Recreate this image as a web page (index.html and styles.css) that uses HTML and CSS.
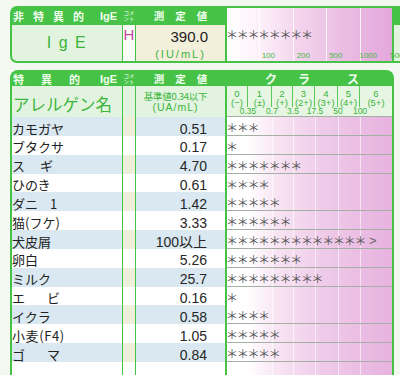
FILE: index.html
```html
<!DOCTYPE html>
<html lang="ja">
<head>
<meta charset="utf-8">
<title>アレルゲン検査結果</title>
<link rel="stylesheet" href="styles.css">
</head>
<body>
<div class="page">
  <section class="box top">
    <div class="hc h-name"><span class="hn1">非特異的</span><span class="ige">IgE</span></div>
    <div class="hc h-com"><span>コメ</span><span>ント</span></div>
    <div class="hc h-val">測定値</div>
    <div class="tgraph">
      <div class="stars tstars">＊＊＊＊＊＊＊＊</div>
      <div class="ticks"><span>100</span><span>200</span><span>500</span><span>1000</span><span>5000</span></div>
    </div>
    <div class="hc h-extra"></div>
    <div class="b-name">I g E</div>
    <div class="b-com">H</div>
    <div class="b-val"><div class="tnum">390.0</div><div class="tunit">(IU/mL)</div></div>
    <div class="b-extra"></div>
  </section>

  <section class="list">
    <div class="row head">
      <div class="hc l-name"><span class="hn2">特異的</span><span class="ige2">IgE</span></div>
      <div class="hc h-com"><span>コメ</span><span>ント</span></div>
      <div class="hc h-val">測定値</div>
      <div class="hc l-class"><span>ク</span><span class="k2">ラ</span><span class="k3">ス</span></div>
    </div>
    <div class="row sub">
      <div class="s-name">アレルゲン名</div>
      <div class="s-com"></div>
      <div class="s-val"><div class="sv1">基準値0.34以下</div><div class="sv2">(UA/mL)</div></div>
      <div class="s-graph">
        <div class="cls">0<br>(−)</div>
        <div class="cls">1<br>(±)</div>
        <div class="cls">2<br>(+)</div>
        <div class="cls">3<br>(2+)</div>
        <div class="cls">4<br>(3+)</div>
        <div class="cls">5<br>(4+)</div>
        <div class="cls last">6<br>(5+)</div>
        <div class="thr"><span>0.35</span></div>
        <div class="thr"><span>0.7</span></div>
        <div class="thr"><span>3.5</span></div>
        <div class="thr"><span>17.5</span></div>
        <div class="thr"><span>50</span></div>
        <div class="thr"><span>100</span></div>
        <div class="thr"></div>
      </div>
    </div>

    <div class="row d odd"><div class="n">カモガヤ</div><div class="c"></div><div class="v">0.51</div><div class="g"><span class="stars">＊＊＊</span></div></div>
    <div class="row d"><div class="n">ブタクサ</div><div class="c"></div><div class="v">0.17</div><div class="g"><span class="stars">＊</span></div></div>
    <div class="row d odd"><div class="n">ス<span class="gap g15">　</span>ギ</div><div class="c"></div><div class="v">4.70</div><div class="g"><span class="stars">＊＊＊＊＊＊＊</span></div></div>
    <div class="row d"><div class="n">ひのき</div><div class="c"></div><div class="v">0.61</div><div class="g"><span class="stars">＊＊＊＊</span></div></div>
    <div class="row d odd"><div class="n">ダニ<span class="gap g12">　</span>1</div><div class="c"></div><div class="v">1.42</div><div class="g"><span class="stars">＊＊＊＊＊</span></div></div>
    <div class="row d"><div class="n">猫(フケ)</div><div class="c"></div><div class="v">3.33</div><div class="g"><span class="stars">＊＊＊＊＊＊</span></div></div>
    <div class="row d odd"><div class="n">犬皮屑</div><div class="c"></div><div class="v">100以上</div><div class="g"><span class="stars">＊＊＊＊＊＊＊＊＊＊＊＊＊</span><span class="more">&gt;</span></div></div>
    <div class="row d"><div class="n">卵白</div><div class="c"></div><div class="v">5.26</div><div class="g"><span class="stars">＊＊＊＊＊＊＊</span></div></div>
    <div class="row d odd"><div class="n">ミルク</div><div class="c"></div><div class="v">25.7</div><div class="g"><span class="stars">＊＊＊＊＊＊＊＊＊</span></div></div>
    <div class="row d"><div class="n">エ<span class="gap g22">　</span>ビ</div><div class="c"></div><div class="v">0.16</div><div class="g"><span class="stars">＊</span></div></div>
    <div class="row d odd"><div class="n">イクラ</div><div class="c"></div><div class="v">0.58</div><div class="g"><span class="stars">＊＊＊＊</span></div></div>
    <div class="row d"><div class="n sp3">小麦(F4)</div><div class="c"></div><div class="v">1.05</div><div class="g"><span class="stars">＊＊＊＊＊</span></div></div>
    <div class="row d odd"><div class="n">ゴ<span class="gap g22">　</span>マ</div><div class="c"></div><div class="v">0.84</div><div class="g"><span class="stars">＊＊＊＊＊</span></div></div>
    <div class="row d"><div class="n"></div><div class="c"></div><div class="v"></div><div class="g"></div></div>
  </section>
</div>
</body>
</html>
```

FILE: styles.css
```css
* { box-sizing: border-box; margin: 0; padding: 0; }
html, body { width: 400px; height: 375px; overflow: hidden; }
body {
  background: #f3f8f0;
  font-family: "Noto Sans CJK JP", "Noto Sans", sans-serif;
  color: #222;
}
.page {
  padding: 6px 0 0 10px;
  display: flex;
  flex-direction: column;
  gap: 7px;
}

/* ---------- shared header cells ---------- */
.hc {
  background: #46c346;
  color: #f2fff0;
  font-weight: 700;
  font-size: 11px;
  line-height: 12px;
  display: flex;
  align-items: center;
  white-space: nowrap;
}
.h-com {
  flex-direction: column;
  justify-content: center;
  font-size: 5.5px;
  line-height: 6.5px;
  font-weight: 400;
}
.h-val {
  justify-content: center;
  letter-spacing: 11px;
  padding-left: 11px;
  font-size: 10.5px;
}
.ige, .ige2 { font-family: "Liberation Sans", sans-serif; letter-spacing: 0; }

/* ---------- top box ---------- */
.box {
  border: 2px solid #46c346;
  background: #46c346;
}
.top {
  width: 424px;
  display: grid;
  grid-template-columns: 110px 12px 89px 166px 40px;
  grid-template-rows: 16px 36px;
  column-gap: 1px;
  row-gap: 1px;
  border-radius: 7px;
  overflow: hidden;
}
.h-name { padding-left: 1px; }
.hn1 { letter-spacing: 9px; }
.ige { margin-left: 7px; }
.h-extra { border-left: 1px solid #46c346; }

.tgraph {
  grid-column: 4;
  grid-row: 1 / 3;
  border-left: 1px solid #46c346;
  display: flex;
  flex-direction: column;
  padding-top: 21px;
  background:
    linear-gradient(to right,
      transparent 32px, rgba(255,255,255,.85) 32px 33px,
      transparent 33px 66px, rgba(255,255,255,.85) 66px 67px,
      transparent 67px 99px, rgba(255,255,255,.85) 99px 100px,
      transparent 100px 133px, rgba(255,255,255,.85) 133px 134px,
      transparent 134px),
    linear-gradient(to right, #ffffff 0%, #fdf2fa 18%, #f3d2ec 45%, #eabce3 72%, #e4a8db 100%);
}
.tstars { line-height: 12px; color: #444; }
.ticks {
  margin-top: auto;
  display: grid;
  grid-template-columns: 32px 34px 33px 34px 32px;
  font-family: "Liberation Sans", sans-serif;
  font-size: 8px;
  line-height: 11px;
  color: #45b845;
}
.ticks span { text-align: right; transform: translateX(50%); }

.b-name {
  background: #e2f4df;
  color: #3cb43c;
  font-family: "Liberation Sans", sans-serif;
  font-size: 16px;
  letter-spacing: 1.5px;
  display: flex;
  align-items: center;
  justify-content: center;
  white-space: pre;
}
.b-com {
  background: #fafcf8;
  color: #c2499e;
  font-family: "Liberation Sans", sans-serif;
  font-size: 15px;
  line-height: 16px;
  padding-top: 2px;
  text-align: center;
}
.b-val {
  background: #f2efdb;
  display: flex;
  flex-direction: column;
}
.tnum {
  font-family: "Liberation Sans", sans-serif;
  font-size: 15px;
  line-height: 16px;
  padding-top: 4px;
  padding-right: 17px;
  text-align: right;
  color: #222;
}
.tunit {
  font-family: "Liberation Sans", sans-serif;
  font-size: 11px;
  letter-spacing: 2px;
  line-height: 12px;
  margin-top: 3px;
  text-align: center;
  color: #3cb43c;
}
.b-extra { background: #e2f4df; border-left: 1px solid #46c346; }

/* ---------- allergen list ---------- */
.list {
  width: 384px;
  border: 2px solid #46c346;
  border-bottom: 0;
  border-radius: 8px 8px 0 0;
  background: #46c346;
  overflow: hidden;
  display: flex;
  flex-direction: column;
}
.row {
  display: grid;
  grid-template-columns: 110px 12px 89px 166px;
  column-gap: 1px;
}
.head { height: 14px; }
.l-name { padding-left: 1px; }
.hn2 { letter-spacing: 17px; }
.ige2 { margin-left: 3px; }
.l-class {
  border-left: 1px solid #46c346;
  padding-left: 38px;
  font-size: 12px;
}
.l-class .k2 { margin-left: 21px; }
.l-class .k3 { margin-left: 37px; }

.sub { height: 31px; }
.s-name {
  background: #e2f4df;
  color: #3cb43c;
  font-size: 16.5px;
  line-height: 20px;
  padding-top: 8px;
  padding-left: 1px;
  white-space: nowrap;
}
.s-com { background: #e2f4df; }
.s-val {
  background: #e2f4df;
  color: #3cb43c;
  text-align: center;
  padding-right: 10px;
  padding-top: 5px;
}
.sv1 { font-size: 9.5px; line-height: 10.5px; letter-spacing: -0.3px; white-space: nowrap; }
.sv2 { font-family: "Liberation Sans", sans-serif; font-size: 10.5px; line-height: 11px; letter-spacing: 1px; }
.s-graph {
  background: #e6f6e2;
  border-left: 1px solid #46c346;
  border-bottom: 1px solid #a3b0a3;
  display: grid;
  grid-template-columns: 21px 24px 21px 22px 23px 22px 1fr;
  grid-template-rows: 21px 9px;
  color: #3cb43c;
}
.cls {
  font-family: "Liberation Sans", sans-serif;
  font-size: 9.5px;
  line-height: 9px;
  padding-top: 3px;
  text-align: center;
  border-right: 1px solid #5cc85c;
  white-space: nowrap;
}
.cls.last { border-right: 0; }
.thr {
  font-family: "Liberation Sans", sans-serif;
  font-size: 8.5px;
  line-height: 9px;
  text-align: right;
  white-space: nowrap;
}
.thr span { display: inline-block; transform: translateX(50%); }

.d { height: 18.85px; }
.d > div {
  display: flex;
  align-items: center;
  padding-top: 4px;
  line-height: 14px;
  white-space: nowrap;
}
.n { background: #ffffff; font-size: 13px; color: #222; }
.c { background: #ffffff; }
.v {
  background: #ffffff;
  justify-content: flex-end;
  padding-right: 18px;
  font-family: "Liberation Sans", "Noto Sans CJK JP", sans-serif;
  font-size: 14px;
  color: #262626;
}
.odd .n, .odd .v { background: #d9e8f1; }
.odd .c { background: #eeefdb; }
.gap { display: inline-block; overflow: hidden; }
.g12 { width: 12px; }
.g15 { width: 15px; }
.g22 { width: 22px; }
.sp3 { letter-spacing: 0.6px; }

.g {
  border-left: 1px solid #46c346;
  border-bottom: 1px solid #a3b0a3;
  background:
    linear-gradient(to right,
      transparent 21px, rgba(255,255,255,.6) 21px 22px,
      transparent 22px 45px, rgba(255,255,255,.6) 45px 46px,
      transparent 46px 66px, rgba(255,255,255,.6) 66px 67px,
      transparent 67px 88px, rgba(255,255,255,.6) 88px 89px,
      transparent 89px 111px, rgba(255,255,255,.6) 111px 112px,
      transparent 112px 133px, rgba(255,255,255,.6) 133px 134px,
      transparent 134px),
    linear-gradient(to right, #ffffff 0%, #ffffff 12%, #f7e2f2 32%, #efcbe9 58%, #e7b2df 100%);
}
.stars {
  font-family: "Noto Sans CJK JP", sans-serif;
  font-size: 12px;
  letter-spacing: -1.3px;
  color: #555;
  margin-left: -1px;
}
.more {
  font-family: "Liberation Sans", sans-serif;
  font-size: 13px;
  color: #666;
  margin-left: 4px;
}
```
